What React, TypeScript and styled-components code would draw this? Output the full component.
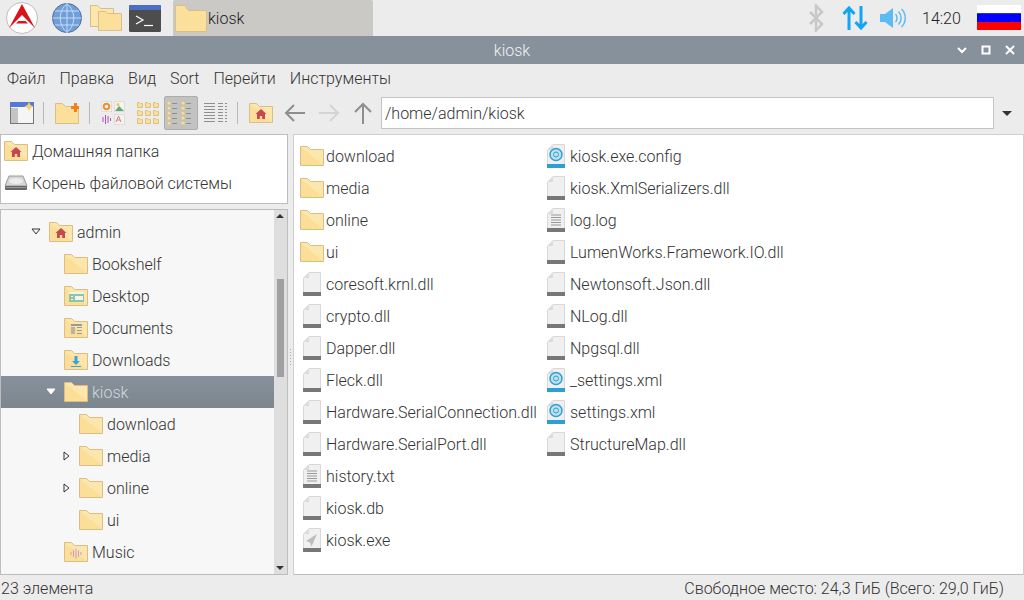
import React from 'react';
import styled, { createGlobalStyle } from 'styled-components';

const GlobalStyle = createGlobalStyle`
  html, body {
    margin: 0;
    padding: 0;
    width: 1024px;
    height: 600px;
    overflow: hidden;
    background: #edecec;
    font-family: Roboto, "Liberation Sans", sans-serif;
    font-size: 16px;
    font-weight: 300;
    color: #333;
  }
`;

const Screen = styled.div`
  width: 1024px;
  height: 600px;
  display: flex;
  flex-direction: column;
`;

const Taskbar = styled.div`
  height: 36px;
  display: flex;
  align-items: center;
  flex: none;
`;

const Launchers = styled.div`
  display: flex;
  align-items: center;
  width: 173px;
  height: 36px;
  flex: none;
`;

const LaunchIcon = styled.svg<{ $left: number }>`
  margin-left: ${(p) => p.$left}px;
  flex: none;
`;

const TaskButton = styled.div`
  width: 200px;
  height: 36px;
  background: #cbc9c5;
  border-radius: 2px 2px 0 0;
  display: flex;
  align-items: center;
  padding-left: 2px;
  gap: 1px;
  box-sizing: border-box;
  color: #222;
  flex: none;
`;

const Tray = styled.div`
  margin-left: auto;
  display: flex;
  align-items: center;
  height: 36px;
`;

const Clock = styled.span`
  font-size: 16px;
  color: #222;
  margin-left: 16px;
  width: 40px;
`;

const Flag = styled.div`
  width: 44px;
  height: 25px;
  margin: -1px 3px 0 15px;
  background: linear-gradient(#fff 0 8px, #2a2ae0 8px 9px, #0000ff 9px 17px, #ff0000 17px);
`;

const TitleBar = styled.div`
  height: 28px;
  flex: none;
  background: #87919b;
  position: relative;
  display: flex;
  align-items: center;
  justify-content: center;
  color: #f0f1f2;
  font-size: 16px;
`;

const WindowButtons = styled.div`
  position: absolute;
  right: 0;
  top: 0;
  height: 28px;
  display: flex;
  align-items: center;
  gap: 10px;
  padding-right: 7px;
`;

const MenuBar = styled.div`
  height: 28px;
  flex: none;
  display: flex;
  align-items: center;
  gap: 14px;
  padding-left: 7px;
  color: #333;
`;

const Toolbar = styled.div`
  height: 42px;
  flex: none;
  display: flex;
  align-items: center;
`;

const ToolIcon = styled.div<{ $width: number; $active?: boolean; $after?: number }>`
  width: ${(p) => p.$width}px;
  height: 34px;
  margin-right: ${(p) => p.$after ?? 0}px;
  flex: none;
  display: flex;
  align-items: center;
  justify-content: center;
  box-sizing: border-box;
  border-radius: 2px;
  ${(p) => (p.$active ? 'background: #c2c2c0; border: 1px solid #adadad;' : '')}
`;

const Separator = styled.div<{ $before?: number }>`
  width: 1px;
  height: 22px;
  margin-left: ${(p) => p.$before ?? 0}px;
  background: #b8b8b8;
  flex: none;
`;

const PathEntry = styled.div`
  width: 613px;
  height: 32px;
  margin-left: 7px;
  background: #fff;
  border: 1px solid #c4c4c4;
  box-sizing: border-box;
  display: flex;
  align-items: center;
  padding-left: 3px;
  flex: none;
`;

const DropArrow = styled.div`
  width: 0;
  height: 0;
  margin-left: 8px;
  border-left: 5px solid transparent;
  border-right: 5px solid transparent;
  border-top: 5px solid #333;
`;

const Main = styled.div`
  flex: 1;
  min-height: 0;
  display: flex;
`;

const Side = styled.div`
  width: 288px;
  flex: none;
  display: flex;
  flex-direction: column;
  gap: 5px;
`;

const Places = styled.div`
  height: 70px;
  flex: none;
  background: #fff;
  border: 1px solid #bdbdbd;
  box-sizing: border-box;
`;

const PlaceRow = styled.div`
  height: 32px;
  display: flex;
  align-items: center;
  gap: 4px;
  padding-left: 3px;
`;

const TreeBox = styled.div`
  flex: 1;
  min-height: 0;
  display: flex;
  background: #f7f7f7;
  border: 1px solid #bdbdbd;
  box-sizing: border-box;
`;

const TreeList = styled.div`
  flex: 1;
  overflow: hidden;
  padding-top: 6px;
`;

const TreeRow = styled.div<{ $depth: number; $selected?: boolean }>`
  height: 32px;
  display: flex;
  align-items: center;
  gap: 4px;
  padding-left: ${(p) => 48 + p.$depth * 15}px;
  position: relative;
  color: ${(p) => (p.$selected ? '#d3d7db' : '#333')};
  ${(p) => (p.$selected ? 'background: linear-gradient(#87919b, #7c868f);' : '')}
`;

const Expander = styled.svg`
  position: absolute;
  top: 10px;
  flex: none;
`;

const Scrollbar = styled.div`
  width: 13px;
  flex: none;
  background: #dedede;
  position: relative;
`;

const ScrollThumb = styled.div`
  position: absolute;
  left: 3px;
  top: 69px;
  width: 7px;
  height: 98px;
  background: #a0a0a0;
`;

const ScrollArrow = styled.div<{ $down?: boolean }>`
  position: absolute;
  left: 2px;
  ${(p) => (p.$down ? 'bottom: 4px;' : 'top: 4px;')}
  width: 0;
  height: 0;
  border-left: 4px solid transparent;
  border-right: 4px solid transparent;
  ${(p) => (p.$down ? 'border-top: 4px solid #333;' : 'border-bottom: 4px solid #333;')}
`;

const Handle = styled.div`
  width: 5px;
  flex: none;
  display: flex;
  flex-direction: column;
  justify-content: center;
  align-items: center;
  gap: 2px;
  padding-top: 4px;
  box-sizing: border-box;
`;

const Dot = styled.span`
  width: 1px;
  height: 1px;
  background: #aaa;
`;

const FilePane = styled.div`
  flex: 1;
  min-width: 0;
  background: #fff;
  border: 1px solid #cfcfcf;
  border-bottom: 1px solid #bdbdbd;
  box-sizing: border-box;
  display: grid;
  grid-auto-flow: column;
  grid-template-rows: repeat(13, 32px);
  grid-template-columns: 244px 244px;
  align-content: start;
  padding: 5px 0 0 6px;
`;

const FileRow = styled.div`
  height: 32px;
  display: flex;
  align-items: center;
  gap: 2px;
`;

const StatusBar = styled.div`
  height: 25px;
  flex: none;
  display: flex;
  align-items: center;
  justify-content: space-between;
  padding: 2px 20px 0 1px;
  box-sizing: border-box;
`;

const GridIconWrap = styled.div`
  display: grid;
  grid-template-columns: repeat(3, 6px);
  gap: 2px;
`;

const ColumnIconWrap = styled.div`
  display: grid;
  grid-template-columns: repeat(2, 14px);
`;

const ColumnEntry = styled.div`
  display: flex;
  align-items: center;
  height: 5px;
  gap: 1px;
`;

const ColumnDash = styled.span`
  width: 5px;
  height: 1px;
  background: #8f8f8f;
`;

type FolderKind = 'plain' | 'home' | 'desktop' | 'documents' | 'downloads' | 'music';

const FolderIcon: React.FC<{ kind?: FolderKind }> = ({ kind = 'plain' }) => (
  <svg width="24" height="20" viewBox="0 0 24 20" style={{ flex: 'none' }}>
    <defs>
      <linearGradient id="folderFill" x1="0" y1="1" x2="1" y2="0">
        <stop offset="0" stopColor="#fbdf98" />
        <stop offset="0.5" stopColor="#fbdf98" />
        <stop offset="0.5" stopColor="#fde6ab" />
        <stop offset="1" stopColor="#fde6ab" />
      </linearGradient>
    </defs>
    <path d="M.5.5h7l3 3h13v16H.5z" fill="url(#folderFill)" stroke="#d9bf85" strokeWidth="1" />
    {kind === 'home' && <path d="M12 6l5.500 5H16v5h-2.800v-3h-2.400v3H8v-5H6.500z" fill="#c8474f" />}
    {kind === 'desktop' && (
      <>
        <rect x="5" y="6" width="15" height="10" fill="#8cc6a8" />
        <rect x="5" y="6" width="15" height="2" fill="#f3f3ea" />
        <rect x="11" y="10" width="8" height="4" fill="#f3f3ea" />
        <rect x="7" y="10" width="2" height="1" fill="#f3f3ea" />
        <rect x="7" y="13" width="2" height="1" fill="#f3f3ea" />
      </>
    )}
    {kind === 'documents' && (
      <>
        <rect x="7" y="6" width="11" height="2" fill="#9b9b94" />
        <rect x="7" y="9" width="4" height="7" fill="#b4b4ac" />
        <rect x="13" y="9" width="5" height="1" fill="#9b9b94" />
        <rect x="13" y="12" width="5" height="1" fill="#9b9b94" />
        <rect x="13" y="15" width="5" height="1" fill="#9b9b94" />
      </>
    )}
    {kind === 'downloads' && (
      <>
        <path d="M10.500 6h3v5h2.500L12 15l-4-4h2.500z" fill="#3ba1dc" />
        <rect x="7" y="16" width="10" height="1" fill="#3ba1dc" />
      </>
    )}
    {kind === 'music' && (
      <path
        d="M7 10v3M9.500 8v7M12 6.500v10M14.500 8.500v6M17 10v3"
        stroke="#c79bd1"
        strokeWidth="1"
        fill="none"
      />
    )}
  </svg>
);

type FileKind = 'dll' | 'text' | 'exe' | 'web';

const FileIcon: React.FC<{ kind?: FileKind }> = ({ kind = 'dll' }) => (
  <svg width="18" height="24" viewBox="0 0 18 24" style={{ flex: 'none', margin: '0 3px' }}>
    <path d="M6 .5h11.500v22.500H.5V6z" fill="#f0f0f0" stroke="#d8d8d8" />
    <path d="M6 .5V6H.5z" fill="#dcdcdc" />
    <rect x="0" y="20" width="18" height="4" fill={kind === 'web' ? '#2f9fcf' : '#777'} />
    {kind === 'text' && (
      <path d="M4 7h10M4 9.500h10M4 12h10M4 14.500h10M4 17h10" stroke="#999" strokeWidth="1" />
    )}
    {kind === 'exe' && <path d="M14 6L3 13l4 1.500L8.500 18.500z" fill="#bcbcbc" />}
    {kind === 'web' && (
      <>
        <circle cx="9" cy="10.500" r="6" fill="#bfe0ef" stroke="#2f9fcf" strokeWidth="1.500" />
        <circle cx="9" cy="10.500" r="2.500" fill="none" stroke="#2f9fcf" strokeWidth="1" />
      </>
    )}
  </svg>
);

const DiskIcon: React.FC = () => (
  <svg width="24" height="20" viewBox="0 0 24 20" style={{ flex: 'none' }}>
    <path d="M5 3h14l4 10H1z" fill="#d6d6d6" stroke="#9a9a9a" />
    <ellipse cx="12" cy="8" rx="7" ry="3" fill="#ececec" />
    <rect x="1" y="13" width="22" height="4" rx="1" fill="#666" />
    <rect x="2" y="14" width="20" height="1" fill="#999" />
  </svg>
);

const ToolFolder: React.FC<{ size: number }> = ({ size }) => (
  <svg width={size} height={size} viewBox="0 0 6 6">
    <path d="M.5.5h2l1 1h2v4h-5z" fill="#fbe09c" stroke="#dcc07e" strokeWidth="1" />
  </svg>
);

const GridIcons: React.FC = () => (
  <GridIconWrap>
    {Array.from({ length: 9 }, (_, i) => (
      <ToolFolder key={i} size={6} />
    ))}
  </GridIconWrap>
);

const ColumnIcons: React.FC = () => (
  <ColumnIconWrap>
    {Array.from({ length: 10 }, (_, i) => (
      <ColumnEntry key={i}>
        <ToolFolder size={4} />
        <ColumnDash />
      </ColumnEntry>
    ))}
  </ColumnIconWrap>
);

const files: { name: string; icon: 'folder' | FileKind }[] = [
  { name: 'download', icon: 'folder' },
  { name: 'media', icon: 'folder' },
  { name: 'online', icon: 'folder' },
  { name: 'ui', icon: 'folder' },
  { name: 'coresoft.krnl.dll', icon: 'dll' },
  { name: 'crypto.dll', icon: 'dll' },
  { name: 'Dapper.dll', icon: 'dll' },
  { name: 'Fleck.dll', icon: 'dll' },
  { name: 'Hardware.SerialConnection.dll', icon: 'dll' },
  { name: 'Hardware.SerialPort.dll', icon: 'dll' },
  { name: 'history.txt', icon: 'text' },
  { name: 'kiosk.db', icon: 'dll' },
  { name: 'kiosk.exe', icon: 'exe' },
  { name: 'kiosk.exe.config', icon: 'web' },
  { name: 'kiosk.XmlSerializers.dll', icon: 'dll' },
  { name: 'log.log', icon: 'text' },
  { name: 'LumenWorks.Framework.IO.dll', icon: 'dll' },
  { name: 'Newtonsoft.Json.dll', icon: 'dll' },
  { name: 'NLog.dll', icon: 'dll' },
  { name: 'Npgsql.dll', icon: 'dll' },
  { name: '_settings.xml', icon: 'web' },
  { name: 'settings.xml', icon: 'web' },
  { name: 'StructureMap.dll', icon: 'dll' },
];

const tree: {
  name: string;
  depth: number;
  kind?: FolderKind;
  arrow?: 'open' | 'closed';
  selected?: boolean;
}[] = [
  { name: 'admin', depth: 0, kind: 'home', arrow: 'open' },
  { name: 'Bookshelf', depth: 1 },
  { name: 'Desktop', depth: 1, kind: 'desktop' },
  { name: 'Documents', depth: 1, kind: 'documents' },
  { name: 'Downloads', depth: 1, kind: 'downloads' },
  { name: 'kiosk', depth: 1, arrow: 'open', selected: true },
  { name: 'download', depth: 2 },
  { name: 'media', depth: 2, arrow: 'closed' },
  { name: 'online', depth: 2, arrow: 'closed' },
  { name: 'ui', depth: 2 },
  { name: 'Music', depth: 1, kind: 'music' },
  { name: '', depth: 1 },
];

const App: React.FC = () => {
  return (
    <Screen>
      <GlobalStyle />
      <Taskbar>
        <Launchers>
          <LaunchIcon $left={6} width="32" height="32" viewBox="0 0 32 32">
            <circle cx="16" cy="16" r="15.500" fill="#fff" stroke="#bdbdbd" />
            <path d="M16 2l13 24L16 13 3 26z" fill="#d7141a" />
            <path d="M12.500 19h7l2.500 2.500H10z" fill="#d7141a" />
          </LaunchIcon>
          <LaunchIcon $left={14} width="30" height="30" viewBox="0 0 30 30">
            <circle cx="15" cy="15" r="14.500" fill="#6f9edb" stroke="#4f6f95" />
            <path
              d="M15 .5v29M.5 15h29M3 8h24M3 22h24M15 .5c-9 8-9 21 0 29M15 .5c9 8 9 21 0 29"
              fill="none"
              stroke="#c9dcf3"
              strokeWidth="1"
            />
          </LaunchIcon>
          <LaunchIcon $left={8} width="32" height="26" viewBox="0 0 32 26">
            <path d="M.5.5h7l3 3h13v18H.5z" fill="#fde6ab" stroke="#d9bf85" />
            <path d="M8.500 6.500h7l2 2h14v17h-23z" fill="#fbe09c" stroke="#d9bf85" />
          </LaunchIcon>
          <LaunchIcon $left={7} width="32" height="27" viewBox="0 0 32 27">
            <rect width="32" height="27" rx="1.500" fill="#4d4d4d" />
            <rect width="32" height="5" rx="1" fill="#4a6fc4" />
            <path d="M7 11l7 4-7 4" fill="none" stroke="#fff" strokeWidth="1.200" />
            <path d="M15 20.500h9" stroke="#fff" strokeWidth="1.200" />
          </LaunchIcon>
        </Launchers>
        <TaskButton>
          <svg width="32" height="27" viewBox="0 0 32 27">
            <path d="M.5.500h9l4 5h18v21H.5z" fill="#fbe09c" stroke="#d9bf85" />
          </svg>
          kiosk
        </TaskButton>
        <Tray>
          <svg width="16" height="28" viewBox="0 0 16 28" fill="none" stroke="#c8c8c8" strokeWidth="2.500">
            <path d="M2 8l12 12-6 6.500V1.500L14 8 2 20" />
          </svg>
          <svg
            width="26"
            height="26"
            viewBox="0 0 26 26"
            fill="none"
            stroke="#12a5f4"
            strokeWidth="3"
            style={{ marginLeft: 18 }}
          >
            <path d="M7 25V3M1.500 9L7 3l5.500 6M19 1v22M13.500 17l5.500 6 5.500-6" />
          </svg>
          <svg width="26" height="20" viewBox="0 0 26 20" fill="none" style={{ marginLeft: 12 }}>
            <path d="M0 6h5l8-6v20l-8-6H0z" fill="#5bbcf2" />
            <path
              d="M15.500 6c2 2 2 6 0 8M18.500 3.500c3.500 3.500 3.500 9.500 0 13M21.500 1c5 5 5 13 0 18"
              stroke="#5bbcf2"
              strokeWidth="1.500"
            />
          </svg>
          <Clock>14:20</Clock>
          <Flag />
        </Tray>
      </Taskbar>
      <TitleBar>
        kiosk
        <WindowButtons>
          <svg width="14" height="14" viewBox="0 0 14 14" fill="none" stroke="#fff" strokeWidth="2">
            <path d="M3 5l4 4 4-4" />
          </svg>
          <svg width="14" height="14" viewBox="0 0 14 14" fill="none" stroke="#fff" strokeWidth="2">
            <rect x="3.500" y="3.500" width="7" height="7" />
          </svg>
          <svg width="14" height="14" viewBox="0 0 14 14" fill="none" stroke="#fff" strokeWidth="2">
            <path d="M3 3l8 8M11 3l-8 8" />
          </svg>
        </WindowButtons>
      </TitleBar>
      <MenuBar>
        <span>Файл</span>
        <span>Правка</span>
        <span>Вид</span>
        <span>Sort</span>
        <span>Перейти</span>
        <span>Инструменты</span>
      </MenuBar>
      <Toolbar>
        <ToolIcon $width={43}>
          <svg width="24" height="22" viewBox="0 0 24 22">
            <rect x=".5" y=".5" width="23" height="21" fill="#f5f5f5" stroke="#777" />
            <rect x="1" y="6" width="7" height="15" fill="#c4c4c4" />
            <rect x="0" y="0" width="24" height="5" fill="#5679d8" />
            <path d="M19 0l1.500 3 3 1.500-3 1.500L19 9l-1.500-3-3-1.500 3-1.500z" fill="#f8cf6a" />
          </svg>
        </ToolIcon>
        <Separator />
        <ToolIcon $width={45}>
          <svg width="24" height="22" viewBox="0 0 24 22">
            <path d="M.5 1.500h7l3 3h13v17H.5z" fill="#fbe09c" stroke="#d9bf85" />
            <path d="M16 4h3V1h3v3h2v3h-2v3h-3V7h-3z" fill="#f07f1c" />
          </svg>
        </ToolIcon>
        <Separator />
        <ToolIcon $width={46}>
          <svg width="24" height="24" viewBox="0 0 24 24">
            <rect x=".5" y=".5" width="10" height="10" fill="#f6f2ec" stroke="#e0ddd8" />
            <circle cx="5.500" cy="5.500" r="2.800" fill="none" stroke="#e8913a" strokeWidth="2" />
            <rect x="13.500" y=".5" width="10" height="10" fill="#f6f2ec" stroke="#e0ddd8" />
            <path d="M14 10l4-5 5 5z" fill="#62a87e" />
            <circle cx="17" cy="3.500" r="1.500" fill="#eac46a" />
            <path d="M2 16v5M4.500 14v9M7 15v7M9.500 17v3" stroke="#b14cc0" strokeWidth="1" />
            <rect x="13.500" y="13.500" width="10" height="10" fill="#f6f2ec" stroke="#e0ddd8" />
            <path d="M15 21l2.500-6 2.500 6M16 19h3" fill="none" stroke="#d77b86" strokeWidth="1" />
          </svg>
        </ToolIcon>
        <ToolIcon $width={24} $after={4}>
          <GridIcons />
        </ToolIcon>
        <ToolIcon $width={34} $active>
          <ColumnIcons />
        </ToolIcon>
        <ToolIcon $width={34}>
          <svg width="24" height="24" viewBox="0 0 24 24" fill="none" stroke="#8f8f8f" strokeWidth="1">
            <path d="M1 2.500h11M15 2.500h5M22 2.500h2M1 5.500h11M15 5.500h5M22 5.500h2M1 8.500h11M15 8.500h5M22 8.500h2M1 11.500h11M15 11.500h5M22 11.500h2M1 14.500h11M15 14.500h5M22 14.500h2M1 17.500h11M15 17.500h5M22 17.500h2M1 20.500h11M15 20.500h5M22 20.500h2" />
          </svg>
        </ToolIcon>
        <Separator $before={5} />
        <ToolIcon $width={46}>
          <FolderIcon kind="home" />
        </ToolIcon>
        <ToolIcon $width={22}>
          <svg width="22" height="20" viewBox="0 0 22 20" fill="none" stroke="#8e8e8e" strokeWidth="2">
            <path d="M21 10H2M10 2l-8 8 8 8" />
          </svg>
        </ToolIcon>
        <ToolIcon $width={45}>
          <svg width="22" height="20" viewBox="0 0 22 20" fill="none" stroke="#d4d4d4" strokeWidth="2">
            <path d="M1 10h19M12 2l8 8-8 8" />
          </svg>
        </ToolIcon>
        <ToolIcon $width={23}>
          <svg width="20" height="22" viewBox="0 0 20 22" fill="none" stroke="#8e8e8e" strokeWidth="2">
            <path d="M10 22V2M2 10l8-8 8 8" />
          </svg>
        </ToolIcon>
        <PathEntry>/home/admin/kiosk</PathEntry>
        <DropArrow />
      </Toolbar>
      <Main>
        <Side>
          <Places>
            <PlaceRow>
              <FolderIcon kind="home" />
              Домашняя папка
            </PlaceRow>
            <PlaceRow>
              <DiskIcon />
              Корень файловой системы
            </PlaceRow>
          </Places>
          <TreeBox>
            <TreeList>
              {tree.map((item) => (
                <TreeRow key={item.name + item.depth} $depth={item.depth} $selected={item.selected}>
                  {item.arrow === 'open' && (
                    <Expander
                      width="12"
                      height="12"
                      viewBox="0 0 12 12"
                      style={{ left: 29 + item.depth * 15 }}
                    >
                      <path
                        d="M2 3h8L6 8z"
                        fill={item.selected ? '#fff' : 'none'}
                        stroke={item.selected ? '#fff' : '#333'}
                      />
                    </Expander>
                  )}
                  {item.arrow === 'closed' && (
                    <Expander
                      width="12"
                      height="12"
                      viewBox="0 0 12 12"
                      style={{ left: 30 + item.depth * 15 }}
                    >
                      <path d="M3 2v8l5-4z" fill="none" stroke="#333" />
                    </Expander>
                  )}
                  <FolderIcon kind={item.kind} />
                  {item.name}
                </TreeRow>
              ))}
            </TreeList>
            <Scrollbar>
              <ScrollArrow />
              <ScrollThumb />
              <ScrollArrow $down />
            </Scrollbar>
          </TreeBox>
        </Side>
        <Handle>
          <Dot />
          <Dot />
          <Dot />
          <Dot />
          <Dot />
          <Dot />
        </Handle>
        <FilePane>
          {files.map((file) => (
            <FileRow key={file.name}>
              {file.icon === 'folder' ? <FolderIcon /> : <FileIcon kind={file.icon} />}
              {file.name}
            </FileRow>
          ))}
        </FilePane>
      </Main>
      <StatusBar>
        <span>23 элемента</span>
        <span>Свободное место: 24,3 ГиБ (Всего: 29,0 ГиБ)</span>
      </StatusBar>
    </Screen>
  );
};

export default App;
